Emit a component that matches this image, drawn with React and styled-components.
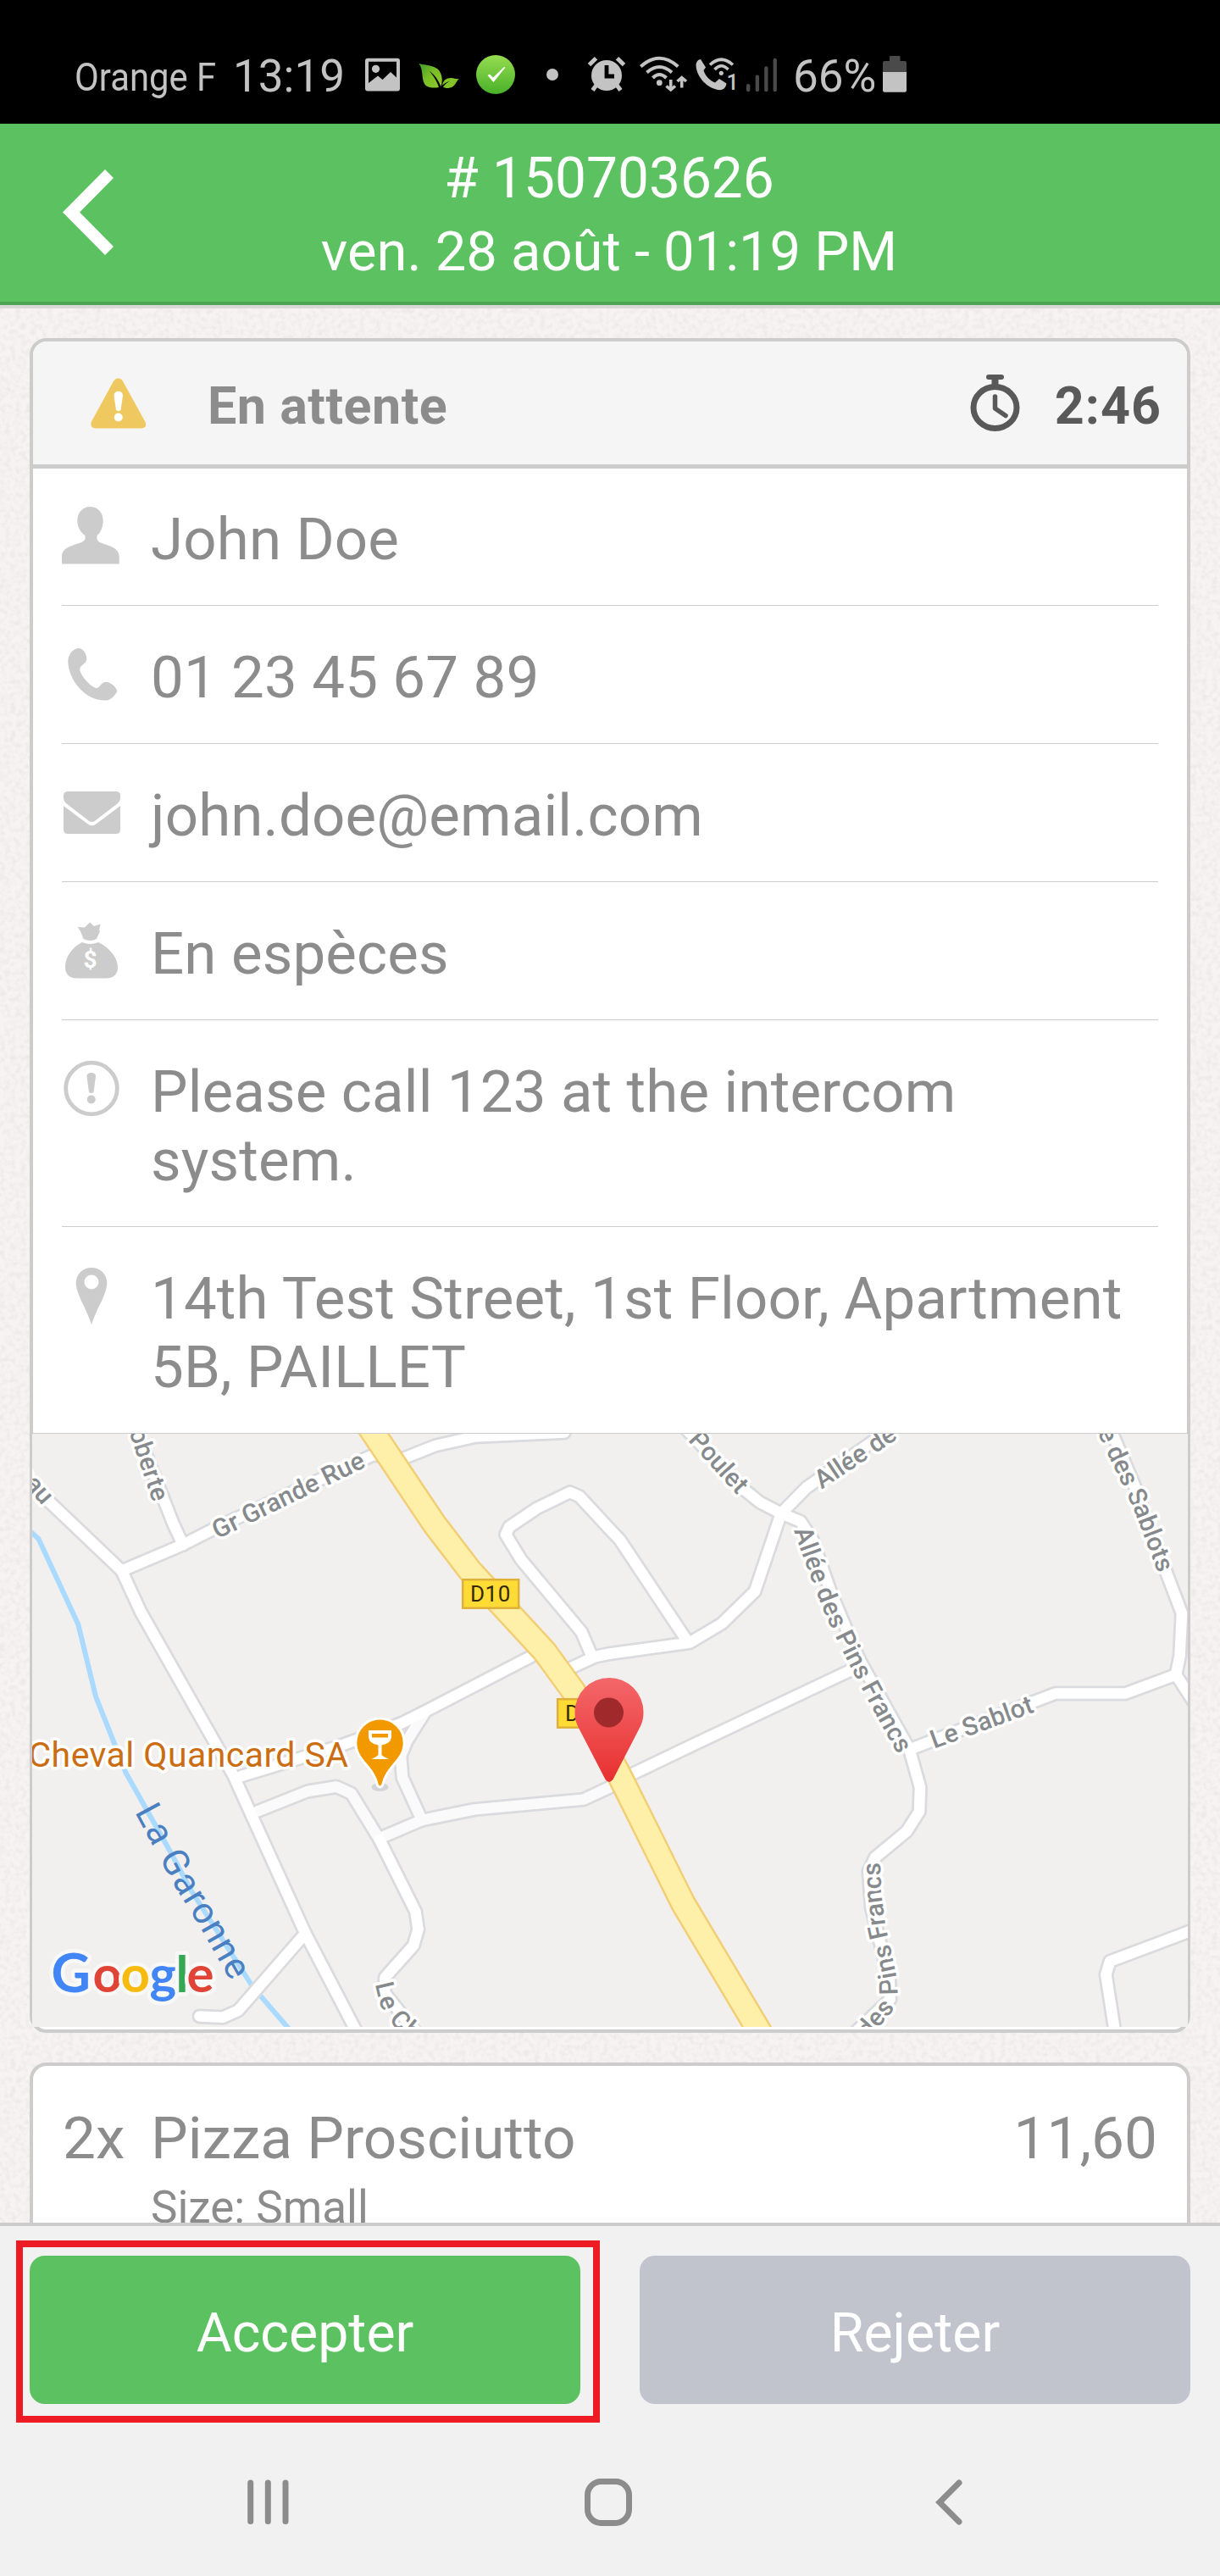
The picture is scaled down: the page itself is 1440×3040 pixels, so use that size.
import React from "react";
import styled, { createGlobalStyle } from "styled-components";

const contactRows = [
  { id: "name", icon: PersonIcon, text: "John Doe" },
  { id: "phone", icon: PhoneIcon, text: "01 23 45 67 89" },
  { id: "email", icon: MailIcon, text: "john.doe@email.com" },
  { id: "payment", icon: MoneyIcon, text: "En espèces" },
  {
    id: "note",
    icon: NoteIcon,
    text: "Please call 123 at the intercom system.",
  },
  {
    id: "address",
    icon: PlaceIcon,
    text: "14th Test Street, 1st Floor, Apartment 5B, PAILLET",
  },
];

// secondary roads are drawn slightly darker than the main ones
const minorRoads = [
  "M304 2137.500L363 2114L397 2108.500L414.600 2116.500L448 2171",
  "M450 2168.400L498 2148L560 2135.400L688.700 2123.600L720 2109L746 2094",
  "M498 2148L475 2097.600L473 2072L480 2055L502 2020",
];

const roads = [
  "M30 1747L60 1774L143.700 1853.700L166 1902L275.500 2095L360.400 2281.700L421 2398",
  "M143.700 1853.700L215.800 1823L257 1802L440.800 1716.800L475 1721.500L514 1706L560 1695.600L666 1690.500",
  "M216 1823L204 1797L160 1685",
  "M285 2096L399.400 2061L473 2034L505 2018L629 1953.700",
  "M672.600 1968.800L702.500 1955L720 1951.500L814 1938.600L852 1916L891 1878L922 1786L952 1755.500L1052 1686",
  "M698.800 1955L686.400 1926L615 1840.500L597 1811L601 1802L633.600 1780L672.600 1761L684 1766L720 1805L731.500 1817L812 1938",
  "M796 1672L878.400 1757.900L897 1773L922 1786L945 1795.600L959 1817L981 1880L1014 1958L1073.500 2064.600L1086 2109.400L1085 2138L1070 2161.400L1033 2192L1025.300 2208.600L1028.500 2251L1049.700 2336L1050.600 2359.600L1010 2398",
  "M1009 1968.800L812 2062L745.300 2094",
  "M448 2171L490.400 2255.700L493.600 2277L488 2296L454.500 2333.600L454 2352L490 2397",
  "M360.400 2281.700L281 2372.800L263 2380.800L235.500 2379.400",
  "M1073.500 2064.600L1245.700 1998.500L1328.400 1998.500L1388 1976.400L1410 2010",
  "M1388 1976.400L1392.600 1953.700L1395 1904L1379 1862L1340 1755.500L1310 1685",
  "M1410 2277L1310 2314.700L1305.400 2330.300L1316 2398",
];

const mainRoad =
  "M436 1684L513 1799L555.600 1854.600L642.800 1949L677 1996L730 2093L806.300 2246.300L898 2400";
const river =
  "M30 1802L45.500 1816L92.300 1917L113 2002L149 2093L202 2187L225 2230L298.500 2345L346 2400";

const streets = [
  { id: "eau", path: "M2 1706L58 1770", anchor: "end", label: "eau" },
  { id: "oberte", path: "M150 1650L190.500 1770", anchor: "end", label: "oberte" },
  { id: "grande", path: "M252 1807L437 1717", label: "Gr Grande Rue" },
  { id: "poulet", path: "M793 1664L878 1757.500", anchor: "end", label: "Poulet" },
  { id: "allee", path: "M964 1749L1094 1662", label: "Allée de" },
  {
    id: "pins",
    path: "M947 1803Q958 1836 982 1897Q1007 1956 1076 2078",
    label: "Allée des Pins Francs",
  },
  {
    id: "pins2",
    path: "M987 2426L1022 2394L1045 2367Q1052 2350 1046 2325L1035 2275L1030 2237L1028.500 2198",
    anchor: "end",
    label: "des Pins Francs",
  },
  { id: "sablot", path: "M1099 2054L1238 2003", label: "Le Sablot" },
  {
    id: "sablots",
    path: "M1282 1640L1326 1730L1347 1775L1377 1853",
    anchor: "end",
    label: "e des Sablots",
  },
  {
    id: "lech",
    path: "M453 2339L458 2360Q463 2375 478 2389L510 2415",
    label: "Le Ch",
  },
];

function BackIcon() {
  return (
    <svg width="62" height="102" viewBox="0 0 62 102" fill="#fff">
      <path d="M50 0L60 10L20 50.500L60 91L50 101L0 50.500Z" />
    </svg>
  );
}

function WarningIcon() {
  return (
    <svg width="66" height="60" viewBox="0 0 66 60">
      <path
        d="M27.500 3Q32.500-2.500 37.500 3L64.500 52Q67 59 60 59.500H5.500Q-1 59 .7 52Z"
        fill="#efc95f"
      />
      <path d="M27.500 21C27.500 14 38 14 38 21L35.500 38Q32.700 40 30 38Z" fill="#fff" />
      <circle cx="32.700" cy="46.500" r="5" fill="#fff" />
    </svg>
  );
}

function StopwatchIcon() {
  return (
    <svg width="60" height="68" viewBox="0 0 60 68" fill="none" stroke="#595959">
      <ellipse cx="29.500" cy="39" rx="25.500" ry="24.500" strokeWidth="7" />
      <path d="M22 3H37" strokeWidth="6" strokeLinecap="round" />
      <path d="M29.500 4V13" strokeWidth="8" />
      <path
        d="M29.500 26V40L42 48.500"
        strokeWidth="5.500"
        strokeLinecap="round"
        strokeLinejoin="round"
      />
    </svg>
  );
}

function PersonIcon() {
  return (
    <RowIcon viewBox="0 0 70 70">
      <path d="M33.500 0C42.500 0 48.700 7 48.700 16.500C48.700 24 46 30 41.500 34V38.500C44 46 67.700 44 67.700 59V67.500H0V59C0 44 23 46 27.500 38.500V34C22 30 18.300 24 18.300 16.500C18.300 7 24.500 0 33.500 0Z" />
    </RowIcon>
  );
}

function PhoneIcon() {
  return (
    <RowIcon viewBox="0 0 70 70">
      <path d="M20 4C13 4 7 12 7.300 20C8 42 28 66 51 65.600C57 65.500 61 62 65 55.500C66 51.500 58 43.800 52 43.800C46 44 45 51.500 40.500 50.900C33 49 22 36 21.100 29C21 24 29.400 22 29.400 16.400C29.400 11 25 4 20 4Z" />
    </RowIcon>
  );
}

function MailIcon() {
  return (
    <RowIcon viewBox="0 0 70 70">
      <path d="M7 10H64Q69 10 69 15V18Q69 21.500 66 24L40 44Q35.500 48 31 44L5 24Q2 21.500 2 18V15Q2 10 7 10Z" />
      <path d="M2 27L30 48Q35.500 52.500 41 48L69 27V55Q69 60 64 60H7Q2 60 2 55Z" />
    </RowIcon>
  );
}

function MoneyIcon() {
  return (
    <RowIcon viewBox="0 0 70 70">
      <path d="M18.500 7L27 7.500L33 1.500L38 6L45.500 3.500L44 11L45 12L41 21Q33.500 25 25.500 21L22 12Z" />
      <path d="M24 25Q33.500 29 43 25C54 30 66 42 66 54C66 63 61 67.500 52 67.500H18C9 67.500 4 63 4 54C4 42 13 30 24 25Z" />
      <text
        x="33.500"
        y="55"
        fill="#fff"
        fontSize="28"
        fontWeight="700"
        textAnchor="middle"
      >
        $
      </text>
    </RowIcon>
  );
}

function NoteIcon() {
  return (
    <RowIcon viewBox="0 0 70 70">
      <circle cx="35" cy="34.500" r="30.300" fill="none" stroke="#ccc" strokeWidth="4.800" />
      <path d="M29.500 20C29.500 14.500 40 14.500 40 20L37.500 39Q34.700 41 32 39Z" />
      <circle cx="34.700" cy="47.500" r="5" />
    </RowIcon>
  );
}

function PlaceIcon() {
  return (
    <RowIcon viewBox="0 0 70 70">
      <path
        fillRule="evenodd"
        d="M35 2C45.500 2 53.300 10 53.300 20C53.300 33 42 48 35 69C28 48 16.700 33 16.700 20C16.700 10 24.500 2 35 2ZM35 10.500A8.500 8.500 0 1 0 35 27.500A8.500 8.500 0 1 0 35 10.500Z"
      />
    </RowIcon>
  );
}

function Status() {
  return (
    <StatusBar>
      <Carrier>Orange F</Carrier>
      <StatusText $left={19} $width={131}>
        13:19
      </StatusText>
      <StatusIcon $left={25} width="41" height="44" viewBox="0 0 41 44">
        <path
          fillRule="evenodd"
          d="M3 2.700H38Q41 2.700 41 5.700V38.600Q41 41.600 38 41.600H3Q0 41.600 0 38.600V5.700Q0 2.700 3 2.700ZM4 6.700V32L15 23.500L20.500 28L30 19L37 25.500V6.700Z"
        />
        <circle cx="12.500" cy="15.300" r="4.600" />
      </StatusIcon>
      <StatusIcon $left={22} width="48" height="44" viewBox="0 0 48 44">
        <defs>
          <linearGradient id="leaf" x1="0" y1="0" x2="1" y2="1">
            <stop offset="0" stopColor="#3f9a2c" />
            <stop offset=".5" stopColor="#7cbf26" />
            <stop offset="1" stopColor="#8fca2b" />
          </linearGradient>
        </defs>
        <path
          d="M.3 9C8 11 16 11 22 15C28 20 29 29 26.500 36C23 28 19 22 13 18C19 25 22 31 24 37C18 38 10 38 7 33C3 25 6 16 .3 9Z"
          fill="url(#leaf)"
        />
        <path
          d="M28 35C29 28 34 25.500 39 26C42 26.500 45 27.500 48 27C44 30 43 37 37 37.500C34 38.500 31 38 29 36.500Q33 31 38 29.500Q31 31 28 35Z"
          fill="#84c428"
        />
      </StatusIcon>
      <StatusIcon $left={20} width="46" height="46" viewBox="0 0 46 46">
        <defs>
          <linearGradient id="ok" x1="0" y1="0" x2="0" y2="1">
            <stop offset="0" stopColor="#97dc50" />
            <stop offset="1" stopColor="#48b129" />
          </linearGradient>
        </defs>
        <circle cx="23" cy="23" r="23" fill="url(#ok)" />
        <path
          d="M13.500 24L16 22.500L20 26.500L33 14L34.500 14.500L20.500 32Z"
          fill="#fff"
        />
      </StatusIcon>
      <StatusIcon $left={37} width="14" height="44" viewBox="0 0 14 44">
        <circle cx="7" cy="22" r="7" />
      </StatusIcon>
      <StatusIcon $left={34} width="46" height="44" viewBox="0 0 46 44">
        <circle cx="23" cy="23" r="18" />
        <path
          d="M2.500 10.500L10.500 2.800M35.500 2.800L43.500 10.500M12 33L6.500 40.500M34 33L39.500 40.500"
          stroke="#c3c3c3"
          strokeWidth="5"
        />
        <path d="M23 11V24H32" fill="none" stroke="#000" strokeWidth="4.800" />
      </StatusIcon>
      <StatusIcon $left={15} width="57" height="44" viewBox="0 0 57 44">
        <g fill="none" stroke="#c3c3c3" strokeWidth="4">
          <path d="M2.300 12.500Q24.300-7 46.300 12.500M9.500 19.500Q24.300 6.500 39 19.500M16.500 26Q24.300 18 32.500 26" />
          <path d="M37.700 28V39M32.500 35.500L37.700 40L43 35.500" strokeWidth="3.600" />
          <path d="M50.700 37.500V26.500M45.500 30L50.700 25.500L56 30" strokeWidth="3.600" />
        </g>
        <circle cx="24.300" cy="31.700" r="3.400" />
      </StatusIcon>
      <StatusIcon $left={10} width="49" height="44" viewBox="0 0 49 44">
        <path d="M6 4L12 13.500L9.500 17C11 23 17 29.500 23 31.500L28 27L36.500 32.500C36 37 33 40 29 40.300C14 39 1 25 .5 11C.8 7 3 4 6 4Z" />
        <g fill="none" stroke="#c3c3c3" strokeWidth="3.600">
          <path d="M17 10.500Q30.300-2 44 10.500M22.500 16Q30.300 7.500 38.500 16" />
        </g>
        <circle cx="30.300" cy="20.300" r="2.600" />
        <text x="36.500" y="40" fontSize="25" fontWeight="500">
          1
        </text>
      </StatusIcon>
      <StatusIcon $left={10} $dim width="38" height="44" viewBox="0 0 38 44">
        <rect x="1" y="33" width="4.300" height="9.300" rx="2" />
        <rect x="11.700" y="22.500" width="4.300" height="19.800" rx="2" />
        <rect x="22.200" y="12.200" width="4.300" height="30.100" rx="2" />
        <rect x="32.600" y="2.700" width="4.300" height="39.600" rx="2" />
      </StatusIcon>
      <StatusText $left={18} $width={100}>
        66%
      </StatusText>
      <StatusIcon $left={6} $dim width="28" height="44" viewBox="0 0 28 44">
        <path d="M8 1Q8 0 9 0H19.500Q20.500 0 20.500 1V6H26Q28 6 28 8V19H0V8Q0 6 2 6H8Z" />
        <path d="M0 19H28V40.700Q28 42.700 26 42.700H2Q0 42.700 0 40.700Z" fill="#c3c3c3" />
      </StatusIcon>
    </StatusBar>
  );
}

function DeliveryMap() {
  return (
    <MapFrame>
      <svg width="1364" height="700" viewBox="38 1692 1364 700">
        <defs>
          <linearGradient id="pin" x1="0" y1="0" x2="0" y2="1">
            <stop offset="0" stopColor="#f4676a" />
            <stop offset="1" stopColor="#e83030" />
          </linearGradient>
          {streets.map((s) => (
            <path key={s.id} id={s.id} d={s.path} />
          ))}
          <path id="garonne" d="M172 2131L216 2213L252 2272L294 2346" />
        </defs>
        <rect x="38" y="1692" width="1364" height="700" fill="#f1f0ee" />
        <path d={river} fill="none" stroke="#aadaff" strokeWidth="6" />
        <RoadLines $color="#dadbdf" $width={18}>
          {[...minorRoads, ...roads].map((d) => (
            <path key={d} d={d} />
          ))}
        </RoadLines>
        <RoadLines $color="#fafafa" $width={12.5}>
          {minorRoads.map((d) => (
            <path key={d} d={d} />
          ))}
        </RoadLines>
        <RoadLines $color="#fff" $width={12.5}>
          {roads.map((d) => (
            <path key={d} d={d} />
          ))}
        </RoadLines>
        <RoadLines $color="#f2ce74" $width={31}>
          <path d={mainRoad} />
        </RoadLines>
        <RoadLines $color="#fff0a9" $width={26}>
          <path d={mainRoad} />
        </RoadLines>

        {streets.map((s) => (
          <StreetName key={s.id} dy="10.500">
            <textPath
              href={`#${s.id}`}
              textAnchor={s.anchor}
              startOffset={s.anchor === "end" ? "100%" : "0"}
            >
              {s.label}
            </textPath>
          </StreetName>
        ))}
        <RiverName dy="15">
          <textPath href="#garonne" textLength="230">
            La Garonne
          </textPath>
        </RiverName>

        <RoadBadge>
          <rect x="546.200" y="1864.200" width="66" height="33.500" />
          <text x="555" y="1890">D10</text>
          <rect x="658.200" y="2005.200" width="66" height="33.500" />
          <text x="667" y="2031">D10</text>
        </RoadBadge>

        <PlaceName x="33.500" y="2084.500" textLength="377.500">
          Cheval Quancard SA
        </PlaceName>
        <ellipse cx="448.500" cy="2109" rx="10" ry="5" fill="#d3d3da" />
        <path
          d="M448.500 2028A28.700 28.700 0 0 1 477.200 2056.700C477.200 2078 456 2084 451.500 2107Q448.500 2111 445.500 2107C441 2084 419.800 2078 419.800 2056.700A28.700 28.700 0 0 1 448.500 2028Z"
          fill="#f29900"
          stroke="#fff"
          strokeWidth="3"
        />
        <path
          fillRule="evenodd"
          d="M435 2042H462V2050Q461 2058 450.500 2059.500V2071Q452 2073 459 2076H438.500Q445 2073 446.500 2071V2059.500Q436 2058 435 2050ZM439 2046V2050.500H458V2046Z"
          fill="#fff"
        />

        <path
          d="M719 1980A40.500 40.500 0 0 1 759.500 2020.500C759.500 2029 757.500 2035 754 2041L723.500 2100Q719 2106 714.500 2100L684 2041C680.500 2035 678.500 2029 678.500 2020.500A40.500 40.500 0 0 1 719 1980Z"
          fill="url(#pin)"
        />
        <circle cx="718.500" cy="2021" r="17.500" fill="#a02a2b" />

        <GoogleMark>
          <tspan x="60.500" fill="#4285f4" fontSize="64">G</tspan>
          <tspan x="109.500" fill="#e04437">o</tspan>
          <tspan x="142.500" fill="#f6bb0e">o</tspan>
          <tspan x="176.500" fill="#4285f4">g</tspan>
          <tspan x="207.500" fill="#34a853">l</tspan>
          <tspan x="220.500" fill="#e04437">e</tspan>
        </GoogleMark>
      </svg>
    </MapFrame>
  );
}

export default function App() {
  return (
    <Screen>
      <GlobalStyle />
      <Status />
      <Header>
        <BackButton aria-label="Retour">
          <BackIcon />
        </BackButton>
        <Title>
          # 150703626
          <OrderDate>ven. 28 août - 01:19 PM</OrderDate>
        </Title>
      </Header>

      <Content>
        <Texture>
          <filter id="paper" x="0" y="0" width="100%" height="100%">
            <feTurbulence type="fractalNoise" baseFrequency=".16" numOctaves="2" seed="4" />
            <feColorMatrix values="0 0 0 0 .78  0 0 0 0 .74  0 0 0 0 .73  1.200 0 0 0 -.480" />
          </filter>
          <rect width="100%" height="100%" filter="url(#paper)" />
        </Texture>

        <Card>
          <CardHeader>
            <WarningIcon />
            <State>En attente</State>
            <StopwatchIcon />
            <Timer>2:46</Timer>
          </CardHeader>
          <Rows>
            {contactRows.map(({ id, icon: Icon, text }) => (
              <Row key={id}>
                <Icon />
                <span>{text}</span>
              </Row>
            ))}
          </Rows>
          <DeliveryMap />
        </Card>

        <Card>
          <OrderItem>
            <span>2x</span>
            <span>Pizza Prosciutto</span>
            <span>11,60</span>
            <Option>Size: Small</Option>
          </OrderItem>
        </Card>
      </Content>

      <Footer>
        <ButtonSlot>
          <ActionButton $color="#5cc261">Accepter</ActionButton>
          <Highlight />
        </ButtonSlot>
        <ButtonSlot>
          <ActionButton $color="#c1c4cd">Rejeter</ActionButton>
        </ButtonSlot>
      </Footer>

      <NavBar>
        <svg width="50" height="54" viewBox="0 0 50 54">
          <path d="M4.700 4V49.500M25.300 4V49.500M46 4V49.500" />
        </svg>
        <svg width="56" height="56" viewBox="0 0 56 56">
          <rect x="3.500" y="3.500" width="49" height="49" rx="16" />
        </svg>
        <svg width="41" height="54" viewBox="-9 0 41 54">
          <path d="M28 4L5 27L28 50" />
        </svg>
      </NavBar>
    </Screen>
  );
}

const GlobalStyle = createGlobalStyle`
  * {
    box-sizing: border-box;
  }
  body {
    margin: 0;
    background: #f1f1f1;
    font-family: Roboto, "Liberation Sans", sans-serif;
  }
  svg {
    display: block;
    flex-shrink: 0;
  }
`;

const Screen = styled.div`
  display: flex;
  flex-direction: column;
  width: 1440px;
  height: 3040px;
  overflow: hidden;
  background: #f1f1f1;
`;

const StatusBar = styled.div`
  display: flex;
  align-items: center;
  height: 146px;
  padding: 30px 0 0 88px;
  background: #000;
  color: #c3c3c3;
  white-space: nowrap;
`;

const Carrier = styled.span`
  width: 168px;
  padding-top: 5px;
  font-size: 47px;
  line-height: 44px;
  transform: scaleX(0.89);
  transform-origin: left;
`;

const StatusText = styled.span`
  width: ${(props) => props.$width}px;
  margin-left: ${(props) => props.$left}px;
  padding-top: 4px;
  font-size: 53px;
  line-height: 44px;
`;

const StatusIcon = styled.svg`
  margin-left: ${(props) => props.$left}px;
  overflow: visible;
  fill: ${(props) => (props.$dim ? "#4a4a4a" : "#c3c3c3")};
`;

const Header = styled.header`
  display: grid;
  grid-template-columns: 140px 1fr 140px;
  height: 214px;
  background: #5cc261;
  border-bottom: 4px solid #4fa454;
  color: #fff;
`;

const BackButton = styled.button`
  display: flex;
  align-items: center;
  padding: 0 0 1px 74px;
  background: none;
  border: 0;
`;

const Title = styled.h1`
  margin: 0;
  padding: 21px 2px 0 0;
  font-size: 65.8px;
  font-weight: 400;
  line-height: 87px;
  text-align: center;
`;

const OrderDate = styled.span`
  display: block;
  font-size: 65.1px;
`;

const Content = styled.main`
  position: relative;
  display: flex;
  flex-direction: column;
  gap: 35px;
  height: 2263px;
  padding: 35px 35px 0;
  overflow: hidden;
  background: #f6f3f2;
  border-top: 4px solid #d9d8d6;
`;

const Texture = styled.svg`
  position: absolute;
  inset: 0;
  width: 100%;
  height: 100%;
`;

const Card = styled.section`
  position: relative;
  flex-shrink: 0;
  background: #fff;
  border: 4px solid #ccc;
  border-radius: 20px;
`;

const CardHeader = styled.div`
  display: flex;
  align-items: center;
  height: 150px;
  padding: 0 30px 0 68px;
  background: #f5f5f5;
  border-bottom: 5px solid #ccc;
  border-radius: 16px 16px 0 0;
  font-size: 61px;
  font-weight: 700;
`;

const State = styled.span`
  flex: 1;
  padding: 7px 0 0 72px;
  color: #8c8c8c;
  letter-spacing: 0.5px;
`;

const Timer = styled.span`
  padding: 7px 0 0 40px;
  color: #595959;
  letter-spacing: 1px;
`;

const Rows = styled.div`
  margin-top: -1px;
`;

const Row = styled.div`
  display: flex;
  align-items: flex-start;
  gap: 35px;
  margin: 0 34px;
  padding: 44px 0 37px;
  border-bottom: 1px solid #ccc;
  color: #8c8c8c;
  font-size: 69px;
  letter-spacing: 0.15px;
  line-height: 81px;

  &:last-child {
    margin: 0;
    padding-left: 34px;
    padding-right: 34px;
  }
`;

const RowIcon = styled.svg`
  width: 70px;
  height: 70px;
  margin-top: 2px;
  fill: #ccc;
`;

const MapFrame = styled.div`
  margin: 0 -1px 3px;
  height: 700px;
`;

const RoadLines = styled.g`
  fill: none;
  stroke: ${(props) => props.$color};
  stroke-width: ${(props) => props.$width}px;
  stroke-linejoin: round;
  stroke-linecap: round;
`;

const MapText = styled.text`
  paint-order: stroke;
  stroke: #fff;
  stroke-width: 7px;
  stroke-linejoin: round;
`;

const StreetName = styled(MapText)`
  fill: #868a8d;
  font-size: 30.3px;
  font-weight: 500;
`;

const RiverName = styled.text`
  fill: #4a7fc1;
  font-size: 43px;
`;

const PlaceName = styled(MapText)`
  fill: #cb6d12;
  font-size: 41px;
`;

const RoadBadge = styled.g`
  font-size: 26px;
  letter-spacing: 0.5px;
  fill: #33290a;

  rect {
    fill: #ffdb36;
    stroke: #dfb13a;
    stroke-width: 2.5px;
  }
`;

const GoogleMark = styled(MapText).attrs({ y: 2350.5 })`
  font-family: Lato, Roboto, sans-serif;
  font-size: 60px;
  font-weight: 700;
  stroke: #f8f8f8;
  stroke-width: 9px;
`;

const OrderItem = styled.div`
  display: grid;
  grid-template-columns: 104px 1fr auto;
  height: 400px;
  align-content: start;
  padding: 45px 35px 0;
  color: #8c8c8c;
  font-size: 69.3px;
  line-height: 81px;
`;

const Option = styled.span`
  grid-column: 2 / 4;
  padding-top: 10px;
  font-size: 53px;
  line-height: 62px;
`;

const Footer = styled.footer`
  display: flex;
  gap: 70px;
  padding: 35px 35px 0;
  border-top: 4px solid #ccc;
`;

const ButtonSlot = styled.div`
  position: relative;
  flex: 1;
`;

const ActionButton = styled.button`
  display: block;
  width: 100%;
  height: 175px;
  padding: 7px 0 0;
  background: ${(props) => props.$color};
  border: 0;
  border-radius: 18px;
  color: #fff;
  font-family: inherit;
  font-size: 64.4px;
`;

const Highlight = styled.div`
  position: absolute;
  top: -18px;
  left: -16px;
  width: 689px;
  height: 215px;
  border: 8px solid #ed1c24;
  pointer-events: none;
`;

const NavBar = styled.nav`
  display: flex;
  align-items: center;
  gap: 349px;
  padding: 88px 0 0 291px;

  svg {
    fill: none;
    stroke: #8c8c8c;
    stroke-width: 7px;
    stroke-linecap: round;
  }
`;
